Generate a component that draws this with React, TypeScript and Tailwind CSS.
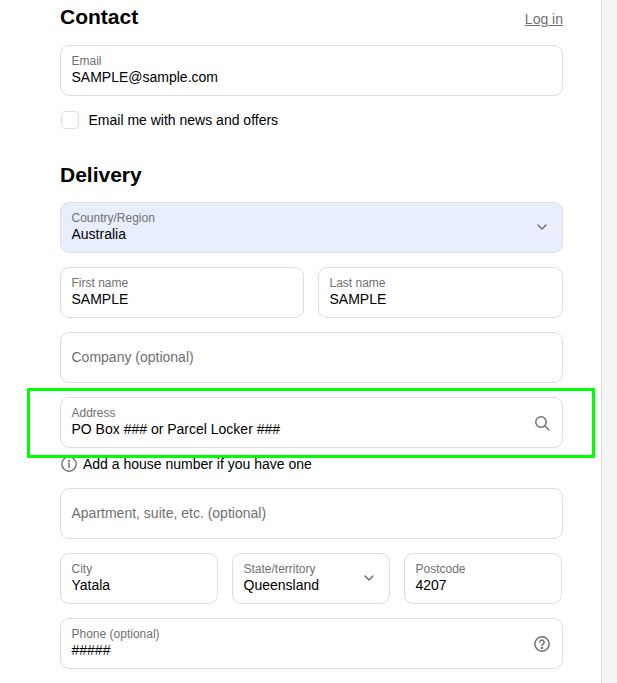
import { ReactNode } from "react";

const font = "font-['Liberation_Sans','Arial',sans-serif]";

function Chevron() {
  return (
    <svg className="mb-[2px] mr-[1px]" width="14" height="14" viewBox="0 0 14 14" fill="none" stroke="#707070" strokeWidth="1.5" strokeLinecap="round" strokeLinejoin="round">
      <path d="M3 5l4 4 4-4" />
    </svg>
  );
}

function SearchIcon() {
  return (
    <svg width="16" height="16" viewBox="0 0 16 16" fill="none" stroke="#707070" strokeWidth="1.5" strokeLinecap="round">
      <circle cx="7" cy="7" r="5.2" />
      <path d="M11 11l4 4" />
    </svg>
  );
}

function HelpIcon() {
  return (
    <svg width="16" height="16" viewBox="0 0 16 16" fill="none" stroke="#707070" strokeWidth="1.5" strokeLinecap="round">
      <circle cx="8" cy="8" r="7.2" />
      <path d="M5.9 6.2a2.1 2.1 0 1 1 3.2 1.8c-.7.4-1.1.8-1.1 1.6" />
      <circle cx="8" cy="11.9" r="0.5" fill="#707070" />
    </svg>
  );
}

function InfoIcon() {
  return (
    <svg width="16" height="16" viewBox="0 0 16 16" fill="none" stroke="#707070" strokeWidth="1.4" strokeLinecap="round">
      <circle cx="8" cy="8" r="7.2" />
      <path d="M8 7.2v4.2" strokeWidth="1.5" />
      <circle cx="8" cy="4.9" r="0.4" fill="#707070" />
    </svg>
  );
}

function Field({ label, value, icon, tinted, className = "" }: { label: string; value?: string; icon?: ReactNode; tinted?: boolean; className?: string }) {
  return (
    <div className={`h-[51px] flex items-center justify-between pl-[10.5px] pr-[12px] border border-[#dedede] rounded-[9px] ${tinted ? "bg-[#e8eefb]" : "bg-white"} ${className}`}>
      {value ? (
        <div className="flex flex-col pb-[4px]">
          <span className="text-[12px] leading-[16px] text-[#707070]">{label}</span>
          <span className="text-[14px] leading-[16px] text-black">{value}</span>
        </div>
      ) : (
        <span className="text-[14px] text-[#707070]">{label}</span>
      )}
      {icon}
    </div>
  );
}

export default function App() {
  return (
    <div className={`relative flex w-[617px] h-[683px] overflow-hidden bg-white ${font}`}>
      <div className="w-[602px] shrink-0 pl-[60px] pr-[38px] border-r border-[#dedede]">
        <div className="flex items-start justify-between h-[27px] mt-[4px]">
          <h2 className="text-[21px] leading-[27px] font-bold text-black -mt-[1px]">Contact</h2>
          <a className="text-[14px] leading-[20px] text-[#707070] underline mt-[5px]">Log in</a>
        </div>
        <Field label="Email" value="SAMPLE@sample.com" className="mt-[14px]" />
        <div className="flex items-center gap-[9.5px] mt-[15px] ml-[1px]">
          <div className="w-[18px] h-[18px] border border-[#dedede] rounded-[4px]" />
          <span className="text-[14px] leading-[18px] text-black">Email me with news and offers</span>
        </div>
        <h2 className="text-[21px] leading-[27px] font-bold text-black mt-[32px]">Delivery</h2>
        <div className="flex flex-col gap-[14px] mt-[14px]">
          <Field label="Country/Region" value="Australia" tinted icon={<Chevron />} />
          <div className="flex gap-[14px]">
            <Field label="First name" value="SAMPLE" className="w-[244px]" />
            <Field label="Last name" value="SAMPLE" className="flex-1" />
          </div>
          <Field label="Company (optional)" />
          <div>
            <Field label="Address" value="PO Box ### or Parcel Locker ###" icon={<SearchIcon />} />
            <div className="flex items-center gap-[6px] mt-[8px] ml-[1px] h-[16px]">
              <InfoIcon />
              <span className="text-[14px] leading-[16px] text-black">Add a house number if you have one</span>
            </div>
          </div>
          <Field label="Apartment, suite, etc. (optional)" className="mt-[2px]" />
          <div className="flex gap-[14px] pr-[1px]">
            <Field label="City" value="Yatala" className="w-[158px]" />
            <Field label="State/territory" value="Queensland" icon={<Chevron />} className="w-[158px]" />
            <Field label="Postcode" value="4207" className="w-[158px]" />
          </div>
          <Field label="Phone (optional)" value="#####" icon={<HelpIcon />} />
        </div>
      </div>
      <div className="flex-1 bg-[#f5f5f5]" />
      <div className="absolute left-[27px] top-[388px] w-[568px] h-[70px] border-[3px] border-[#00ff00] rounded-[1px] pointer-events-none" />
    </div>
  );
}
